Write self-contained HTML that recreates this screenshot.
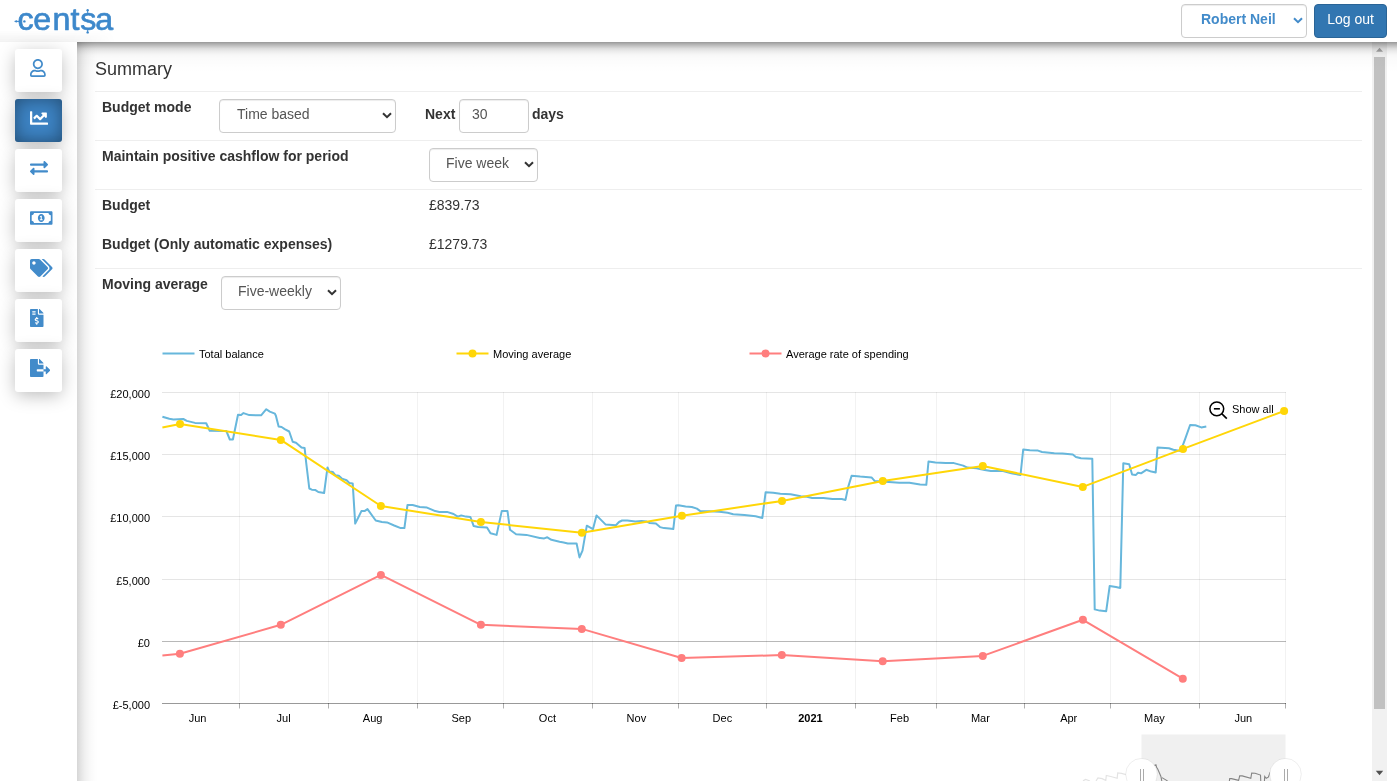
<!DOCTYPE html>
<html lang="en">
<head>
<meta charset="utf-8">
<title>Centsa - Summary</title>
<style>
*{box-sizing:border-box}
html,body{margin:0;padding:0}
body{width:1397px;height:781px;overflow:hidden;background:#fff;font-family:"Liberation Sans",Arial,sans-serif;font-size:14px;line-height:20px;color:#333;position:relative}
.abs{position:absolute}
#header{position:absolute;left:0;top:0;width:1397px;height:42px;background:#fff}
#sidebar{position:absolute;left:0;top:42px;width:77px;height:739px;background:#fff}
#content{position:absolute;left:77px;top:42px;width:1320px;height:739px;background:#fff;overflow:hidden}
#shadowT{position:absolute;left:77px;top:42px;width:1320px;height:30px;pointer-events:none;background:linear-gradient(to bottom,rgba(0,0,0,.40) 0,rgba(0,0,0,.36) 1px,rgba(0,0,0,.31) 2px,rgba(0,0,0,.23) 4px,rgba(0,0,0,.13) 6.7px,rgba(0,0,0,.075) 9.4px,rgba(0,0,0,.027) 13.2px,rgba(0,0,0,.016) 17px,rgba(0,0,0,.008) 24px,rgba(0,0,0,0) 30px)}
#shadowL{position:absolute;left:77px;top:42px;width:22px;height:739px;pointer-events:none;background:linear-gradient(to right,rgba(0,0,0,.16) 0,rgba(0,0,0,.125) 2.5px,rgba(0,0,0,.09) 5px,rgba(0,0,0,.06) 8px,rgba(0,0,0,.04) 10.8px,rgba(0,0,0,.02) 14px,rgba(0,0,0,.005) 18.8px,rgba(0,0,0,0) 22px)}
.navbtn{position:absolute;left:15px;width:47px;height:43px;background:#fff;border-radius:3px;box-shadow:0 4px 18px -1px rgba(0,0,0,.28)}
.navbtn.active{background:#3d84c5;box-shadow:0 4px 18px -1px rgba(0,0,0,.28),inset 0 0 18px rgba(0,0,0,.42)}
.navbtn svg{position:absolute;display:block}
.lbl{position:absolute;font-weight:bold;white-space:nowrap}
.val{position:absolute;white-space:nowrap}
.hr{position:absolute;left:95px;width:1267px;height:1px;background:#eee}
.fc{position:absolute;height:34px;border:1px solid #ccc;border-radius:4px;background:#fff;color:#555;font-size:14px;line-height:20px;padding:4px 12px 8px;white-space:nowrap;box-shadow:inset 0 1px 1px rgba(0,0,0,.075)}
.fc svg{position:absolute;right:3px;top:12px;width:10px;height:7px}
</style>
</head>
<body>
<div id="root" style="position:absolute;left:0;top:0;width:1397px;height:781px;overflow:hidden;will-change:transform">
<div id="header">
  <svg class="abs" style="left:0;top:0" width="130" height="42" viewBox="0 0 130 42">
    <text y="29.700" x="17.6 33.300 52.400 70.600 80.300 95.300" font-family="'Liberation Sans',Arial,sans-serif" font-size="32.200" fill="#3d88cb" stroke="#3d88cb" stroke-width=".7" stroke-linejoin="round">centsa</text>
    <g fill="#3d88cb"><rect x="14.500" y="20.900" width="4.500" height="1"/><circle cx="16.300" cy="21.400" r="1.100"/><circle cx="24.400" cy="21.400" r="1.200"/><rect x="87.200" y="10" width=".9" height="3.600"/><rect x="87.200" y="29.400" width=".9" height="3"/><circle cx="87.650" cy="10.200" r="1.200"/><circle cx="87.650" cy="32.400" r="1.200"/></g>
  </svg>
  <div class="fc" style="left:1181px;top:4px;width:126px;height:34px;color:#428bca;font-weight:bold;padding-left:19px">Robert Neil<svg viewBox="0 0 10 7"><path d="M1 1.2 L5 5.2 L9 1.2" fill="none" stroke="#428bca" stroke-width="2"/></svg></div>
  <div class="abs" style="left:1314px;top:4px;width:73px;height:34px;background:#3276b1;border:1px solid #2a6496;border-radius:4px;color:#fff;font-size:14px;line-height:20px;padding:3.500px 0;text-align:center">Log out</div>
</div>
<div class="abs" style="left:0;top:30px;width:116px;height:12px;background:linear-gradient(to bottom,rgba(0,0,0,0),rgba(0,0,0,.047));-webkit-mask-image:linear-gradient(to right,#000 0,#000 72px,rgba(0,0,0,0) 116px);mask-image:linear-gradient(to right,#000 0,#000 72px,rgba(0,0,0,0) 116px)"></div>
<div id="sidebar">
  <div class="navbtn" style="top:7px"><svg style="left:15px;top:10px;width:15.75px;height:18px" viewBox="0 0 448 512"><path fill="#428bca" d="M313.6 304c-28.7 0-42.5 16-89.6 16-47.1 0-60.8-16-89.6-16C60.2 304 0 364.2 0 438.4V464c0 26.5 21.500 48 48 48h352c26.500 0 48-21.500 48-48v-25.600c0-74.200-60.200-134.400-134.400-134.400zM400 464H48v-25.600c0-47.600 38.800-86.400 86.400-86.400 14.600 0 38.300 16 89.600 16 51.700 0 74.900-16 89.600-16 47.600 0 86.400 38.800 86.400 86.400V464zM224 288c79.500 0 144-64.500 144-144S303.500 0 224 0 80 64.500 80 144s64.500 144 144 144zm0-240c52.900 0 96 43.100 96 96s-43.100 96-96 96-96-43.100-96-96 43.100-96 96-96z"/></svg></div>
  <div class="navbtn active" style="top:57px"><svg style="left:15px;top:10px;width:18.00px;height:18px" viewBox="0 0 512 512"><path fill="#fff" d="M496 384H64V80c0-8.840-7.160-16-16-16H16C7.160 64 0 71.160 0 80v336c0 17.670 14.330 32 32 32h464c8.840 0 16-7.160 16-16v-32c0-8.840-7.160-16-16-16zM464 96H345.940c-21.380 0-32.090 25.850-16.970 40.970l32.400 32.400L288 242.750l-73.370-73.370c-12.500-12.500-32.760-12.500-45.250 0l-68.690 68.690c-6.250 6.250-6.250 16.380 0 22.630l22.620 22.620c6.250 6.250 16.380 6.250 22.630 0L192 237.250l73.370 73.370c12.500 12.500 32.760 12.500 45.250 0l96-96 32.400 32.400c15.120 15.120 40.970 4.410 40.970-16.970V112c.010-8.840-7.150-16-15.990-16z"/></svg></div>
  <div class="navbtn" style="top:107px"><svg style="left:15px;top:10px;width:18.00px;height:18px" viewBox="0 0 512 512"><path fill="#428bca" d="M0 168v-16c0-13.255 10.745-24 24-24h360V80c0-21.367 25.899-32.042 40.971-16.971l80 80c9.372 9.373 9.372 24.569 0 33.941l-80 80C409.956 271.982 384 261.456 384 240v-48H24c-13.255 0-24-10.745-24-24zm488 152H128v-48c0-21.314-25.862-32.080-40.971-16.971l-80 80c-9.372 9.373-9.372 24.569 0 33.941l80 80C102.057 463.997 128 453.437 128 432v-48h360c13.255 0 24-10.745 24-24v-16c0-13.255-10.745-24-24-24z"/></svg></div>
  <div class="navbtn" style="top:157px"><svg style="left:15px;top:10px;width:22.50px;height:18px" viewBox="0 0 640 512"><path fill="#428bca" d="M320 144c-53.020 0-96 50.140-96 112 0 61.850 42.980 112 96 112 53 0 96-50.130 96-112 0-61.860-42.980-112-96-112zm40 168c0 4.420-3.580 8-8 8h-64c-4.420 0-8-3.580-8-8v-16c0-4.420 3.580-8 8-8h16v-55.440l-.470.310a7.992 7.992 0 0 1-11.090-2.220l-8.880-13.310a7.992 7.992 0 0 1 2.220-11.090l15.330-10.220a23.990 23.990 0 0 1 13.310-4.030H328c4.420 0 8 3.580 8 8v88h16c4.420 0 8 3.580 8 8v16zM608 64H32C14.330 64 0 78.330 0 96v320c0 17.670 14.330 32 32 32h576c17.670 0 32-14.330 32-32V96c0-17.670-14.330-32-32-32zm-16 272c-35.350 0-64 28.650-64 64H112c0-35.350-28.650-64-64-64V176c35.350 0 64-28.650 64-64h416c0 35.350 28.650 64 64 64v160z"/></svg></div>
  <div class="navbtn" style="top:207px"><svg style="left:15px;top:10px;width:22.50px;height:18px" viewBox="0 0 640 512"><path fill="#428bca" d="M497.941 225.941L286.059 14.059A48 48 0 0 0 252.118 0H48C21.490 0 0 21.490 0 48v204.118a48 48 0 0 0 14.059 33.941l211.882 211.882c18.744 18.745 49.136 18.746 67.882 0l204.118-204.118c18.745-18.745 18.745-49.137 0-67.882zM112 160c-26.510 0-48-21.490-48-48s21.490-48 48-48 48 21.490 48 48-21.490 48-48 48zm513.941 133.823L421.823 497.941c-18.745 18.745-49.137 18.745-67.882 0l-.360-.360L527.640 323.522c16.999-16.999 26.360-39.600 26.360-63.640s-9.362-46.641-26.360-63.640L331.397 0h48.721a48 48 0 0 1 33.941 14.059l211.882 211.882c18.745 18.745 18.745 49.137 0 67.882z"/></svg></div>
  <div class="navbtn" style="top:257px"><svg style="left:15px;top:10px;width:13.50px;height:18px" viewBox="0 0 384 512"><path fill="#428bca" d="M377 105L279.100 7c-4.500-4.500-10.600-7-17-7H256v128h128v-6.100c0-6.300-2.500-12.400-7-16.900zm-153 31V0H24C10.700 0 0 10.700 0 24v464c0 13.300 10.700 24 24 24h336c13.300 0 24-10.700 24-24V160H248c-13.200 0-24-10.800-24-24zM64 72c0-4.420 3.580-8 8-8h80c4.420 0 8 3.580 8 8v16c0 4.420-3.580 8-8 8H72c-4.420 0-8-3.580-8-8V72zm0 80v-16c0-4.420 3.580-8 8-8h80c4.420 0 8 3.580 8 8v16c0 4.420-3.580 8-8 8H72c-4.420 0-8-3.580-8-8zm144 263.880V440c0 4.420-3.580 8-8 8h-16c-4.420 0-8-3.580-8-8v-24.290c-11.290-.580-22.270-4.520-31.370-11.350-3.900-2.930-4.100-8.770-.570-12.140l11.750-11.210c2.770-2.640 6.890-2.760 10.130-.730 3.870 2.420 8.260 3.720 12.820 3.720h28.110c6.500 0 11.800-5.920 11.800-13.190 0-5.950-3.610-11.190-8.770-12.730l-45-13.500c-18.590-5.580-31.580-23.420-31.580-43.390 0-24.520 19.050-44.440 42.670-45.070V232c0-4.420 3.580-8 8-8h16c4.420 0 8 3.580 8 8v24.290c11.290.580 22.270 4.510 31.370 11.350 3.900 2.930 4.100 8.770.570 12.140l-11.750 11.210c-2.770 2.640-6.890 2.760-10.130.730-3.870-2.430-8.260-3.720-12.820-3.720h-28.110c-6.500 0-11.800 5.920-11.800 13.190 0 5.950 3.610 11.190 8.770 12.730l45 13.500c18.590 5.580 31.580 23.420 31.580 43.390 0 24.530-19.050 44.440-42.670 45.070z"/></svg></div>
  <div class="navbtn" style="top:307px"><svg style="left:15px;top:10px;width:20.25px;height:18px" viewBox="0 0 576 512"><path fill="#428bca" d="M384 121.900c0-6.300-2.500-12.400-7-16.900L279.100 7c-4.500-4.500-10.600-7-17-7H256v128h128zM571 308l-95.700-96.400c-10.100-10.100-27.400-3-27.400 11.300V288h-64v64h64v65.200c0 14.300 17.300 21.400 27.400 11.300L571 332c6.600-6.600 6.600-17.400 0-24zm-379 28v-32c0-8.800 7.200-16 16-16h176V160H248c-13.200 0-24-10.800-24-24V0H24C10.700 0 0 10.700 0 24v464c0 13.300 10.700 24 24 24h336c13.300 0 24-10.700 24-24V352H208c-8.800 0-16-7.200-16-16z"/></svg></div>
</div>
<div id="content">
  <div class="abs" style="left:18px;top:17px;font-size:18px;line-height:20px">Summary</div>
</div>
<div id="form">
  <div class="hr" style="top:91px"></div>
  <div class="lbl" style="left:102px;top:97px">Budget mode</div>
  <div class="fc" style="left:219px;top:99px;width:177px;padding-left:17px">Time based<svg viewBox="0 0 10 7"><path d="M1 1.2 L5 5.2 L9 1.2" fill="none" stroke="#333" stroke-width="2"/></svg></div>
  <div class="lbl" style="left:425px;top:104px">Next</div>
  <div class="fc" style="left:459px;top:99px;width:70px">30</div>
  <div class="lbl" style="left:532px;top:104px">days</div>
  <div class="hr" style="top:140px"></div>
  <div class="lbl" style="left:102px;top:146px">Maintain positive cashflow for period</div>
  <div class="fc" style="left:429px;top:148px;width:109px;padding-left:16px">Five week<svg viewBox="0 0 10 7"><path d="M1 1.2 L5 5.2 L9 1.2" fill="none" stroke="#333" stroke-width="2"/></svg></div>
  <div class="hr" style="top:189px"></div>
  <div class="lbl" style="left:102px;top:195px">Budget</div>
  <div class="val" style="left:429px;top:195px">£839.73</div>
  <div class="lbl" style="left:102px;top:234px">Budget (Only automatic expenses)</div>
  <div class="val" style="left:429px;top:234px">£1279.73</div>
  <div class="hr" style="top:268px"></div>
  <div class="lbl" style="left:102px;top:274px">Moving average</div>
  <div class="fc" style="left:221px;top:276px;width:120px;padding-left:16px">Five-weekly<svg viewBox="0 0 10 7"><path d="M1 1.2 L5 5.2 L9 1.2" fill="none" stroke="#333" stroke-width="2"/></svg></div>
</div>
<svg id="chart" class="abs" style="left:0;top:0" width="1397" height="781" viewBox="0 0 1397 781" font-size="11" font-family="'Liberation Sans',Arial,sans-serif" fill="#000">
<g>
<line x1="162.5" y1="353.5" x2="194.5" y2="353.5" stroke="#67b7dc" stroke-width="2"/><text x="199" y="358">Total balance</text>
<line x1="456.5" y1="353.5" x2="488.5" y2="353.5" stroke="#ffd607" stroke-width="2"/><circle cx="472.5" cy="353.5" r="4" fill="#ffd607"/><text x="493" y="358">Moving average</text>
<line x1="749.5" y1="353.5" x2="781.5" y2="353.5" stroke="#ff7e7e" stroke-width="2"/><circle cx="765.5" cy="353.5" r="4" fill="#ff7e7e"/><text x="786" y="358">Average rate of spending</text>
</g>
<g stroke="#000" stroke-width="1" fill="none">
<line x1="239.5" y1="392" x2="239.5" y2="702" stroke-opacity=".05"/>
<line x1="328.5" y1="392" x2="328.5" y2="702" stroke-opacity=".05"/>
<line x1="417.5" y1="392" x2="417.5" y2="702" stroke-opacity=".05"/>
<line x1="503.5" y1="392" x2="503.5" y2="702" stroke-opacity=".05"/>
<line x1="592.5" y1="392" x2="592.5" y2="702" stroke-opacity=".05"/>
<line x1="678.5" y1="392" x2="678.5" y2="702" stroke-opacity=".05"/>
<line x1="766.5" y1="392" x2="766.5" y2="702" stroke-opacity=".05"/>
<line x1="855.5" y1="392" x2="855.5" y2="702" stroke-opacity=".05"/>
<line x1="936.5" y1="392" x2="936.5" y2="702" stroke-opacity=".05"/>
<line x1="1024.5" y1="392" x2="1024.5" y2="702" stroke-opacity=".05"/>
<line x1="1110.5" y1="392" x2="1110.5" y2="702" stroke-opacity=".05"/>
<line x1="1199.5" y1="392" x2="1199.5" y2="702" stroke-opacity=".05"/>
<line x1="1285.5" y1="392" x2="1285.5" y2="702" stroke-opacity=".05"/>
<line x1="162" y1="392.5" x2="1286" y2="392.5" stroke-opacity=".1"/>
<line x1="162" y1="454.5" x2="1286" y2="454.5" stroke-opacity=".1"/>
<line x1="162" y1="516.5" x2="1286" y2="516.5" stroke-opacity=".1"/>
<line x1="162" y1="579.5" x2="1286" y2="579.5" stroke-opacity=".1"/>
<line x1="162" y1="641.5" x2="1286" y2="641.5" stroke-opacity=".28"/>
<line x1="162" y1="703.5" x2="1286" y2="703.5" stroke-opacity=".4"/>
<line x1="239.5" y1="703" x2="239.5" y2="708.5" stroke-opacity=".31"/>
<line x1="328.5" y1="703" x2="328.5" y2="708.5" stroke-opacity=".31"/>
<line x1="417.5" y1="703" x2="417.5" y2="708.5" stroke-opacity=".31"/>
<line x1="503.5" y1="703" x2="503.5" y2="708.5" stroke-opacity=".31"/>
<line x1="592.5" y1="703" x2="592.5" y2="708.5" stroke-opacity=".31"/>
<line x1="678.5" y1="703" x2="678.5" y2="708.5" stroke-opacity=".31"/>
<line x1="766.5" y1="703" x2="766.5" y2="708.5" stroke-opacity=".31"/>
<line x1="855.5" y1="703" x2="855.5" y2="708.5" stroke-opacity=".31"/>
<line x1="936.5" y1="703" x2="936.5" y2="708.5" stroke-opacity=".31"/>
<line x1="1024.5" y1="703" x2="1024.5" y2="708.5" stroke-opacity=".31"/>
<line x1="1110.5" y1="703" x2="1110.5" y2="708.5" stroke-opacity=".31"/>
<line x1="1199.5" y1="703" x2="1199.5" y2="708.5" stroke-opacity=".31"/>
<line x1="1285.5" y1="703" x2="1285.5" y2="708.5" stroke-opacity=".31"/>
</g>
<g text-anchor="end">
<text x="150" y="398.0">£20,000</text>
<text x="150" y="460.0">£15,000</text>
<text x="150" y="522.0">£10,000</text>
<text x="150" y="585.0">£5,000</text>
<text x="150" y="647.0">£0</text>
<text x="150" y="709.0">£-5,000</text>
</g>
<g text-anchor="middle">
<text x="197.5" y="722">Jun</text>
<text x="283.6" y="722">Jul</text>
<text x="372.6" y="722">Aug</text>
<text x="461.3" y="722">Sep</text>
<text x="547.4" y="722">Oct</text>
<text x="636.4" y="722">Nov</text>
<text x="722.4" y="722">Dec</text>
<text x="810.5" y="722" font-weight="bold">2021</text>
<text x="899.6" y="722">Feb</text>
<text x="980.4" y="722">Mar</text>
<text x="1068.7" y="722">Apr</text>
<text x="1154.4" y="722">May</text>
<text x="1243.3" y="722">Jun</text>
</g>
<g fill="none" stroke-linejoin="round" stroke-linecap="butt">
<path d="M162.4 416.8 L169.3 418.8 L173.4 419.4 L183.3 419.0 L186.8 420.9 L195.0 422.9 L206.2 423.3 L209.7 430.7 L226.3 430.9 L229.8 439.5 L232.9 439.5 L238.0 414.7 L241.1 415.1 L243.5 413.1 L249.3 415.1 L261.1 415.3 L266.3 409.2 L269.8 411.6 L274.9 413.7 L275.9 415.7 L278.6 426.6 L281.6 427.0 L284.7 429.1 L289.2 431.5 L292.7 441.8 L296.0 442.8 L301.5 447.5 L304.6 447.9 L306.2 462.9 L309.3 488.5 L311.8 489.7 L315.5 490.1 L318.3 492.0 L324.1 493.0 L327.5 467.4 L329.2 471.5 L332.9 472.1 L335.3 475.2 L338.8 475.8 L341.9 478.6 L346.6 480.3 L349.3 483.0 L352.7 483.4 L355.2 523.6 L358.3 517.5 L361.4 511.1 L364.5 511.1 L367.5 509.1 L375.7 520.5 L381.9 522.0 L387.0 522.4 L394.2 525.5 L400.7 528.1 L404.4 528.1 L407.5 505.0 L412.6 505.0 L419.8 507.0 L427.0 507.6 L435.2 511.1 L439.3 511.9 L447.0 511.9 L453.6 514.0 L457.7 516.6 L461.2 515.4 L465.9 516.6 L470.4 517.0 L473.7 526.1 L478.2 526.9 L487.0 527.5 L490.5 533.2 L496.6 534.9 L501.8 510.9 L507.5 511.1 L510.0 529.8 L516.1 534.3 L526.4 534.9 L539.7 538.0 L540.1 538.0 L544.2 538.4 L547.3 537.3 L551.4 539.8 L559.6 541.8 L563.7 542.5 L567.8 543.5 L576.6 543.5 L579.5 557.4 L582.5 550.7 L586.8 525.7 L593.0 529.1 L596.5 515.4 L605.7 524.6 L615.9 525.2 L619.0 522.0 L622.1 520.5 L627.2 520.5 L635.4 521.6 L641.6 521.1 L646.7 521.6 L649.8 523.0 L655.9 523.6 L660.0 527.1 L664.1 528.1 L669.2 528.5 L673.3 529.1 L676.0 505.6 L678.4 505.2 L685.6 506.6 L691.8 507.0 L696.9 508.6 L700.0 510.9 L709.2 511.3 L719.4 511.7 L727.6 512.7 L733.2 514.3 L744.5 514.9 L755.7 516.3 L762.3 518.0 L765.6 492.3 L773.2 492.7 L780.3 493.8 L790.6 494.2 L800.8 496.2 L807.0 496.8 L812.1 497.9 L823.4 497.9 L832.6 499.1 L841.8 499.1 L845.5 499.9 L848.0 487.6 L851.6 475.7 L860.2 476.6 L871.5 477.4 L874.6 480.9 L881.8 481.5 L888.9 481.9 L899.2 482.7 L909.4 482.7 L920.1 484.4 L926.3 484.8 L928.5 461.5 L935.5 462.5 L945.7 463.1 L953.9 463.1 L963.2 465.6 L967.3 467.6 L976.5 468.2 L984.7 470.1 L990.8 471.1 L1003.1 471.1 L1011.3 473.2 L1020.5 475.0 L1023.2 449.6 L1029.8 450.2 L1038.0 450.6 L1042.0 452.0 L1054.3 453.3 L1062.5 453.5 L1072.8 454.5 L1075.9 457.0 L1081.0 458.2 L1092.3 458.8 L1094.7 609.4 L1099.7 610.6 L1106.2 611.2 L1109.7 585.9 L1115.9 587.0 L1120.3 587.9 L1123.3 463.3 L1129.2 464.2 L1132.1 474.5 L1135.7 475.1 L1138.0 472.8 L1141.0 473.3 L1146.3 469.8 L1151.3 471.6 L1155.7 472.5 L1157.5 447.4 L1168.9 448.3 L1173.4 449.8 L1180.7 451.0 L1185.1 439.2 L1190.1 425.0 L1195.4 425.3 L1201.3 427.4 L1206.3 426.5" stroke="#67b7dc" stroke-width="2"/>
<path d="M162.4 427.4 L180.0 423.9 L280.8 439.9 L380.9 506.0 L480.9 522.0 L581.9 532.8 L681.9 515.8 L782.0 500.9 L882.8 480.9 L982.8 466.0 L1082.8 486.9 L1183.0 448.9 L1284.1 411.0" stroke="#ffd607" stroke-width="2"/>
<path d="M162.4 655.6 L179.9 653.8 L280.8 624.8 L380.9 574.9 L480.9 624.8 L581.8 628.9 L681.6 658.0 L781.8 655.1 L882.7 661.3 L982.8 655.9 L1082.9 619.8 L1182.8 678.7" stroke="#ff7e7e" stroke-width="2"/>
</g>
<g fill="#ffd607"><circle cx="180.0" cy="423.9" r="4"/><circle cx="280.8" cy="439.9" r="4"/><circle cx="380.9" cy="506.0" r="4"/><circle cx="480.9" cy="522.0" r="4"/><circle cx="581.9" cy="532.8" r="4"/><circle cx="681.9" cy="515.8" r="4"/><circle cx="782.0" cy="500.9" r="4"/><circle cx="882.8" cy="480.9" r="4"/><circle cx="982.8" cy="466.0" r="4"/><circle cx="1082.8" cy="486.9" r="4"/><circle cx="1183.0" cy="448.9" r="4"/><circle cx="1284.1" cy="411.0" r="4"/></g>
<g fill="#ff7e7e"><circle cx="179.9" cy="653.8" r="4"/><circle cx="280.8" cy="624.8" r="4"/><circle cx="380.9" cy="574.9" r="4"/><circle cx="480.9" cy="624.8" r="4"/><circle cx="581.8" cy="628.9" r="4"/><circle cx="681.6" cy="658.0" r="4"/><circle cx="781.8" cy="655.1" r="4"/><circle cx="882.7" cy="661.3" r="4"/><circle cx="982.8" cy="655.9" r="4"/><circle cx="1082.9" cy="619.8" r="4"/><circle cx="1182.8" cy="678.7" r="4"/></g>
<g><circle cx="1216.8" cy="408.8" r="6.9" fill="none" stroke="#000" stroke-width="1.5"/><line x1="1213.9" y1="408.8" x2="1219.9" y2="408.8" stroke="#000" stroke-width="1.6"/><line x1="1221.7" y1="413.7" x2="1226.8" y2="418.6" stroke="#000" stroke-width="1.6"/><text x="1232" y="412.5">Show all</text></g>
<g id="sbar">
<rect x="1141.5" y="734.5" width="144" height="50" fill="#f0f0f0"/>
<path d="M1083 781 L1084.3 780.1 L1085.7 779.4 L1090 781 M1096 781 L1097.9 777.9 L1102.2 778.6 L1105.8 780.5 L1106.3 775.4 L1110.8 776.5 L1117.2 778.3 L1117.7 772.9 L1121.5 773.3 L1126 774.6" fill="none" stroke="#000" stroke-opacity=".11" stroke-width="1.2"/>
<path d="M1150 766 L1154.5 765.4 L1155.9 764.7 L1156.6 767.2 L1157.7 769 L1159 772 L1160.9 776.5 L1161.8 781 M1162 777.6 L1166.6 780.4 L1168 781.5 M1229.3 781.5 L1229.7 778.6 L1231.5 778.6 L1238.6 780.4 L1239.7 775.9 L1242.2 775.9 L1250.8 778.3 L1251.7 773.1 L1255.100 773.3 L1260.5 775.1 L1260.8 781.5 M1264.4 781.5 L1264.7 776.5 L1266.2 778.3 L1268.3 777.2 L1270.1 772.6 L1272 770" fill="none" stroke="#000" stroke-opacity=".45" stroke-width="1.1"/>
<circle cx="1141.5" cy="774.2" r="15.8" fill="#fff" stroke="#000" stroke-opacity=".07" stroke-width="1"/>
<circle cx="1285.500" cy="774.2" r="15.800" fill="#fff" stroke="#000" stroke-opacity=".07" stroke-width="1"/>
<path d="M1140.500 769 V782 M1143.500 769 V782 M1284.500 769 V782 M1287.500 769 V782" fill="none" stroke="#000" stroke-opacity=".33" stroke-width="1"/>
</g>

</svg>
<div class="abs" style="left:1372px;top:42px;width:15px;height:739px;background:#f1f1f1"></div>
<div class="abs" style="left:1374px;top:57px;width:11px;height:652px;background:#c1c1c1"></div>
<svg class="abs" style="left:1372px;top:42px" width="15" height="739" viewBox="0 0 15 739"><path d="M4 9.800 L7.500 5.800 L11 9.800 Z" fill="#a3a3a3"/><path d="M3.800 728.800 L7.500 733.200 L11.200 728.800 Z" fill="#505050"/></svg>
<div id="shadowT"></div><div id="shadowL"></div>
</div>
</body>
</html>
